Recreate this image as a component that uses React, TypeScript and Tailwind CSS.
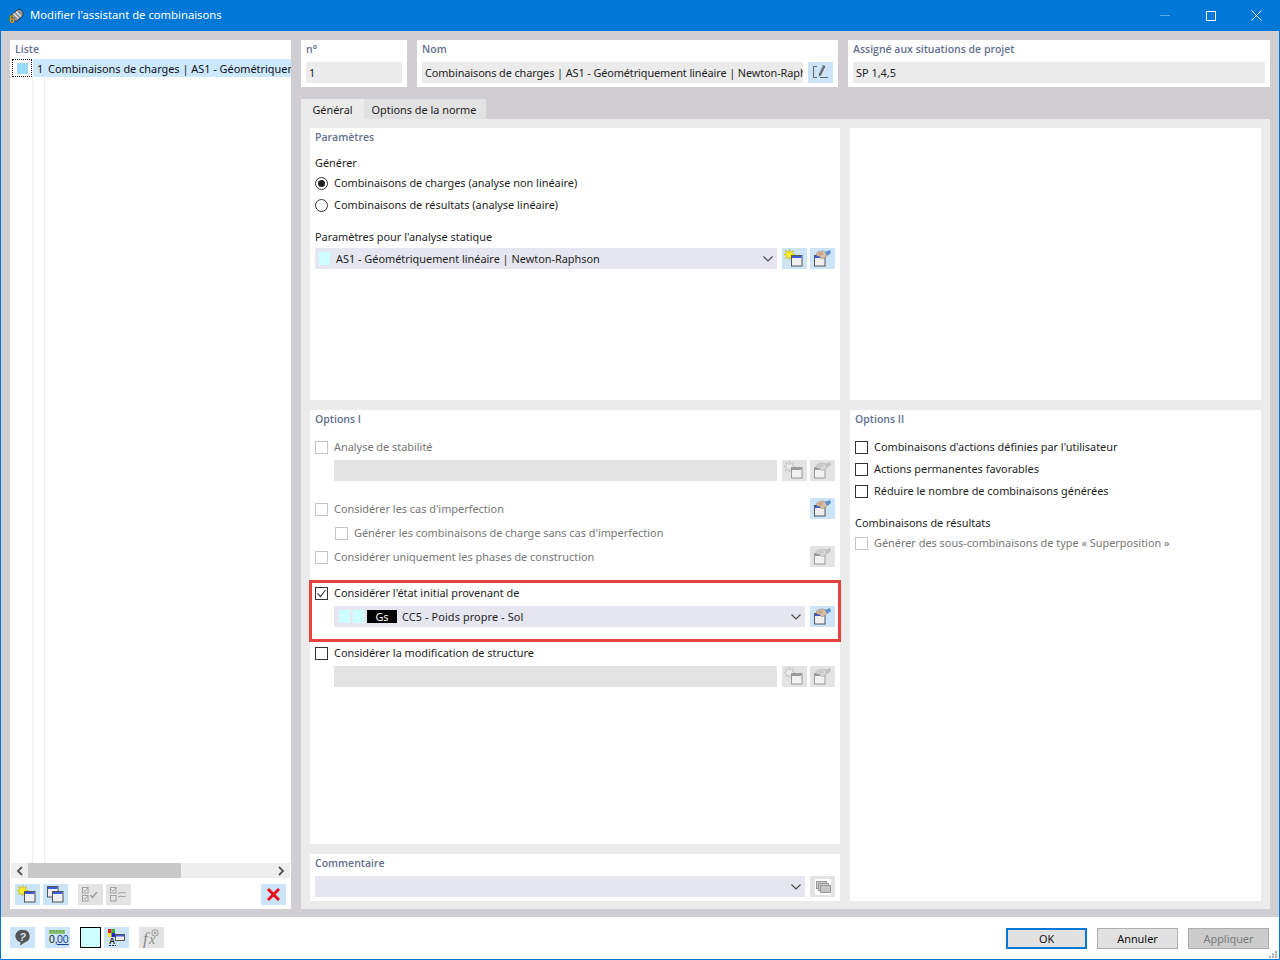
import React from "react";

const FONT = "font-['Noto_Sans','Open_Sans',sans-serif]";

function Win({ x, y, disabled }: { x: number; y: number; disabled?: boolean }) {
  const s = disabled ? "#9a9a9a" : "#555";
  return (
    <g>
      <rect x={x + 0.5} y={y + 0.5} width="10.500" height="10.500" fill={disabled ? "#f2f2f2" : "#efefef"} stroke={s} />
      <rect x={x + 1} y={y + 1} width="9.500" height="2" fill={disabled ? "#9a9a9a" : "#3b5bdb"} />
    </g>
  );
}

function StarIcon({ disabled }: { disabled?: boolean }) {
  return (
    <svg width="21" height="19" viewBox="0 0 21 19">
      <path
        d="M5.500 0l1 3.200L9.500 1.500 8.300 4.500 11 5.500 8.300 6.700 9.500 9.700 6.500 8 5.500 11 4.500 8 1.500 9.700 2.700 6.700 0 5.500l2.700-1L1.500 1.500l3 1.700z"
        fill={disabled ? "#ececec" : "#ffee22"}
        stroke={disabled ? "#aaa" : "#b5a800"}
        strokeWidth="0.500"
      />
      <Win x={7} y={6} disabled={disabled} />
    </svg>
  );
}

function HandIcon({ disabled }: { disabled?: boolean }) {
  return (
    <svg width="21" height="19" viewBox="0 0 21 19">
      <Win x={2} y={6} disabled={disabled} />
      <path
        d="M4 5c1-2 4-3 7-3l3 1c1 1 2 3 0 5l-3 1.500c-2 .5-3-1-3-2L5 7z"
        fill={disabled ? "#d6d6d6" : "#dcc0a6"}
        stroke={disabled ? "#aaa" : "#96785e"}
        strokeWidth="0.500"
      />
      <path d="M6 4.500l5-.5M6.500 6l4-.5" stroke={disabled ? "#aaa" : "#96785e"} strokeWidth="0.500" />
      <path d="M13 3l5-2 1 3-4 3z" fill={disabled ? "#c0c0c0" : "#5b8fd0"} />
    </svg>
  );
}

function EditIcon() {
  return (
    <svg width="21" height="19" viewBox="0 0 21 19">
      <path d="M7 3.500H3.500v11H7" fill="none" stroke="#666" />
      <path d="M10 14.500h8" stroke="#666" />
      <path d="M13 2l2.500 1.200-4.500 9-2 1.300-.2-2.400z" fill="#666" />
      <path d="M13 3.500l-3.500 7" stroke="#bbb" strokeWidth="0.600" />
    </svg>
  );
}

function CopyIcon() {
  return (
    <svg width="21" height="19" viewBox="0 0 21 19">
      <Win x={2} y={1} />
      <Win x={7} y={6} />
    </svg>
  );
}

function CheckAllIcon() {
  return (
    <svg width="21" height="19" viewBox="0 0 21 19" fill="none" stroke="#a0a0a0">
      <rect x="2.500" y="2.500" width="5.500" height="5.500" fill="#eee" />
      <rect x="2.500" y="10.500" width="5.500" height="5.500" fill="#eee" />
      <path d="M3.500 4.500l1.500 2 3-4M3.500 12.500l1.500 2 3-4" />
      <path d="M10.500 10l2 2.500 4.500-5.500" strokeWidth="1.600" />
    </svg>
  );
}

function CheckSwapIcon() {
  return (
    <svg width="21" height="19" viewBox="0 0 21 19" fill="none" stroke="#a0a0a0">
      <rect x="2.500" y="2.500" width="5.500" height="5.500" fill="#eee" />
      <rect x="2.500" y="10.500" width="5.500" height="5.500" />
      <path d="M3.500 4.500l1.500 2 3-4M10 9c2-2 5-2 8-1M10 12c3-2 5 1 8-1" />
    </svg>
  );
}

function CrossIcon() {
  return (
    <svg width="21" height="19" viewBox="0 0 21 19">
      <path d="M5 4l11 11M16 4L5 15" stroke="#e8101c" strokeWidth="3" />
    </svg>
  );
}

function HelpIcon() {
  return (
    <svg width="21" height="19" viewBox="0 0 21 19">
      <path d="M11 2a6.500 6.200 0 0 1 2.500 12L8 17.500l.5-3.300A6.500 6.200 0 0 1 11 2z" fill="#555" />
      <text x="10.500" y="12.500" textAnchor="middle" fontSize="11" fontWeight="700" fontFamily="Liberation Sans" fontStyle="italic" fill="#cce4f7">?</text>
    </svg>
  );
}

function DecimalIcon() {
  return (
    <svg width="23" height="21" viewBox="0 0 23 21">
      <rect x="3" y="3" width="16" height="4" fill="#8ac070" />
      <path d="M5 3v2M8 3v2M11 3v2M14 3v2M17 3v2" stroke="#5a8f48" />
      <text x="3" y="16" fontSize="10.500" fontFamily="Liberation Sans" fill="#222">0,</text>
      <text x="11" y="16" fontSize="10.500" fontFamily="Liberation Sans" fill="#1a3f9c" textDecoration="underline">00</text>
    </svg>
  );
}

function ColorTextIcon() {
  return (
    <svg width="23" height="21" viewBox="0 0 23 21">
      <rect x="3" y="2" width="3.500" height="4" fill="#d22" />
      <rect x="6.500" y="2" width="3.500" height="4" fill="#3a3" />
      <rect x="3" y="6" width="3.500" height="4" fill="#ee2" />
      <rect x="6.500" y="6" width="3.500" height="4" fill="#22c" />
      <text x="4" y="16.500" fontSize="8.500" fontWeight="700" fontFamily="Liberation Sans" fill="#222">A</text>
      <rect x="10.500" y="7.500" width="9" height="6" fill="#eee" stroke="#555" />
      <rect x="11" y="8" width="8" height="1.500" fill="#3b5bdb" />
      <path d="M4 18.500h7" stroke="#222" strokeDasharray="2 1" />
    </svg>
  );
}

function FxIcon() {
  return (
    <svg width="23" height="21" viewBox="0 0 23 21">
      <text x="3" y="17" fontSize="17" fontStyle="italic" fontFamily="Liberation Serif" fill="#8a8a8a">f</text>
      <text x="9" y="17" fontSize="14" fontStyle="italic" fontFamily="Liberation Serif" fill="#8a8a8a">x</text>
      <circle cx="15" cy="6" r="3.200" fill="none" stroke="#9a9a9a" />
      <circle cx="15" cy="6" r="1.200" fill="#9a9a9a" />
    </svg>
  );
}

function StackIcon() {
  return (
    <svg width="16" height="16" viewBox="0 0 16 16">
      <rect x="0" y="0" width="16" height="16" fill="#fff" />
      <rect x="1.500" y="2.500" width="10" height="7" fill="#ccc" stroke="#999" />
      <rect x="3.500" y="4.500" width="10" height="7" fill="#ccc" stroke="#999" />
      <rect x="5.500" y="6.500" width="10" height="7" fill="#c4c4c4" stroke="#999" />
    </svg>
  );
}

function Btn({ children, off }: { children: React.ReactNode; off?: boolean }) {
  return (
    <div className={`w-[25px] h-[21px] shrink-0 flex items-center justify-center ${off ? "bg-[#e3e3e3]" : "bg-[#cce4f7]"}`}>
      {children}
    </div>
  );
}

function Chevron() {
  return (
    <svg width="10" height="6" viewBox="0 0 10 6" fill="none" stroke="#444" strokeWidth="1.100">
      <path d="M0.500 0.500L5 5l4.500-4.500" />
    </svg>
  );
}

function Check({ checked, off }: { checked?: boolean; off?: boolean }) {
  return (
    <div className={`w-[13px] h-[13px] shrink-0 border flex items-center justify-center bg-white ${off ? "border-[#c4c4c4]" : "border-[#333]"}`}>
      {checked && (
        <svg width="11" height="11" viewBox="0 0 11 11" fill="none" stroke="#444" strokeWidth="1.200">
          <path d="M1.500 5.500l3 3 5-6.500" />
        </svg>
      )}
    </div>
  );
}

function Radio({ on }: { on?: boolean }) {
  return (
    <div className="w-[13px] h-[13px] shrink-0 rounded-full border border-[#333] bg-white flex items-center justify-center">
      {on && <div className="w-[7px] h-[7px] rounded-full bg-[#222]" />}
    </div>
  );
}

function CheckRow({ label, checked, off, indent }: { label: string; checked?: boolean; off?: boolean; indent?: boolean }) {
  return (
    <div className={`h-[22px] flex items-center gap-[6px] ${indent ? "pl-[20px]" : ""} ${off ? "text-[#767676]" : "text-[#1e1e1e]"}`}>
      <Check checked={checked} off={off} />
      <span className="whitespace-nowrap">{label}</span>
    </div>
  );
}

function Head({ children }: { children: React.ReactNode }) {
  return <div className="h-[18px] leading-[18px] font-['Open_Sans',sans-serif] text-[10.500px] font-semibold text-[#64708f] whitespace-nowrap">{children}</div>;
}

function Select({ children, className }: { children?: React.ReactNode; className?: string }) {
  return (
    <div className={`h-[21px] bg-[#e6e6f0] flex items-center justify-between pr-[4px] ${className ?? ""}`}>
      <div className="flex items-center min-w-0 pt-[2px]">{children}</div>
      <Chevron />
    </div>
  );
}

function Swatch() {
  return <div className="w-[11px] h-[13px] -mt-[2px] bg-[#ccffff] shrink-0" />;
}

function TopBox({ label, className, children }: { label: string; className: string; children: React.ReactNode }) {
  return (
    <div className={`h-[47px] bg-white px-[5px] ${className}`}>
      <Head>{label}</Head>
      <div className="mt-[4px] flex gap-[5px]">{children}</div>
    </div>
  );
}

function Field({ children, className }: { children?: React.ReactNode; className?: string }) {
  return (
    <div className={`h-[21px] bg-[#ebebeb] px-[3px] leading-[21px] whitespace-nowrap overflow-hidden min-w-0 ${className ?? ""}`}>
      {children}
    </div>
  );
}

function BottomBtn({ children, variant }: { children: string; variant?: "primary" | "off" }) {
  const c =
    variant === "primary"
      ? "border-2 border-[#0078d7] bg-[#e1e1e1] text-[#111]"
      : variant === "off"
        ? "border border-[#adadad] bg-[#cccccc] text-[#7a7a7a]"
        : "border border-[#adadad] bg-[#e1e1e1] text-[#111]";
  return <div className={`w-[81px] h-[21px] flex items-center justify-center pt-[2px] ${c}`}>{children}</div>;
}

export default function App() {
  return (
    <div className={`${FONT} w-[1280px] h-[960px] flex flex-col bg-[#0078d7] text-[10.900px] leading-none text-[#1e1e1e] overflow-hidden`}>
      {/* title bar */}
      <div className="h-[31px] shrink-0 flex items-center text-white text-[11.250px]">
        <div className="w-[30px] pl-[8px] shrink-0">
          <svg width="16" height="16" viewBox="0 0 16 16">
            <path d="M3 7.500L9.500 1.500c1.500-.8 4 .2 5 2s.8 4-.5 5L8 14z" fill="#8a8f98" stroke="#222" strokeWidth="0.800" />
            <path d="M5.500 5.500l5 5M8 3.500l5 5" stroke="#e8e8e8" strokeWidth="1.200" />
            <text x="1" y="15" fontSize="10" fontWeight="700" fontFamily="Liberation Sans" fill="#f2c230" stroke="#5a4000" strokeWidth="0.300">6</text>
          </svg>
        </div>
        <span className="-mt-px">Modifier l'assistant de combinaisons</span>
        <div className="ml-auto flex items-center pr-px">
          <div className="w-[46px] flex justify-center"><div className="w-[10px] h-px bg-[#5ea9e6]" /></div>
          <div className="w-[45px] flex justify-center"><div className="w-[10px] h-[10px] border border-white" /></div>
          <div className="w-[46px] flex justify-center">
            <svg width="11" height="11" viewBox="0 0 11 11" stroke="#fff"><path d="M0.500 0.500l10 10M10.500 0.500l-10 10" /></svg>
          </div>
        </div>
      </div>

      {/* body */}
      <div className="flex-1 mx-px mb-px flex flex-col bg-white min-h-0">
        <div className="h-[886px] shrink-0 bg-[#d0ced3] pt-[9px] pl-[9px] pr-[9px] flex gap-[10px]">
          {/* left list */}
          <div className="w-[281px] h-[869px] bg-white flex flex-col shrink-0">
            <div className="pl-[5px]"><Head>Liste</Head></div>
            <div className="flex-1 relative min-h-0 overflow-hidden">
              <div className="flex h-[18px] mt-px">
                <div className="w-[20px] ml-[2px] shrink-0 border border-dotted border-[#222] flex items-center justify-center">
                  <div className="w-[11px] h-[11px] bg-[#99daf8]" />
                </div>
                <div className="flex-1 min-w-0 ml-px bg-[#cce8ff] flex items-center pt-[2px] whitespace-nowrap overflow-hidden text-[#111]">
                  <span className="w-[11px] ml-[4px] shrink-0">1</span>
                  <span>Combinaisons de charges | AS1 - Géométriquement linéaire | Newton-Raphson</span>
                </div>
              </div>
              <div className="absolute left-[22px] top-[19px] bottom-0 w-px bg-[#eeeeee]" />
              <div className="absolute left-[34px] top-[19px] bottom-0 w-px bg-[#eeeeee]" />
            </div>
            <div className="h-[15px] mx-px bg-[#eeeeee] flex items-center justify-between px-[5px] relative shrink-0">
              <svg width="7" height="10" viewBox="0 0 7 10" fill="none" stroke="#555" strokeWidth="1.800"><path d="M6 1L2 5l4 4" /></svg>
              <div className="absolute left-[17px] top-0 bottom-0 w-[153px] bg-[#c8c8c8]" />
              <svg width="7" height="10" viewBox="0 0 7 10" fill="none" stroke="#555" strokeWidth="1.800"><path d="M1 1l4 4-4 4" /></svg>
            </div>
            <div className="h-[31px] shrink-0 flex items-start pt-[6px] pl-[5px] pr-[5px]">
              <Btn><StarIcon /></Btn>
              <div className="w-[3px]" />
              <Btn><CopyIcon /></Btn>
              <div className="w-[10px]" />
              <Btn off><CheckAllIcon /></Btn>
              <div className="w-[3px]" />
              <Btn off><CheckSwapIcon /></Btn>
              <div className="ml-auto"><Btn><CrossIcon /></Btn></div>
            </div>
          </div>

          {/* right area */}
          <div className="flex-1 min-w-0 flex flex-col">
            <div className="flex gap-[10px] shrink-0">
              <TopBox label="n°" className="w-[106px]">
                <Field className="flex-1">1</Field>
              </TopBox>
              <TopBox label="Nom" className="w-[421px]">
                <Field className="w-[381px] tracking-[-0.1px]">Combinaisons de charges | AS1 - Géométriquement linéaire | Newton-Raphson</Field>
                <Btn><EditIcon /></Btn>
              </TopBox>
              <TopBox label="Assigné aux situations de projet" className="w-[422px]">
                <Field className="flex-1">SP 1,4,5</Field>
              </TopBox>
            </div>

            <div className="flex mt-[12px] h-[20px] shrink-0">
              <div className="w-[63px] bg-[#ebebeb] flex items-center justify-center pt-[2px]">Général</div>
              <div className="w-[122px] bg-[#e2e2e2] flex items-center justify-center pt-[2px] pr-[2px]">Options de la norme</div>
            </div>

            <div className="h-[790px] bg-[#ebebeb] p-[9px] pb-[8px] flex gap-[10px] shrink-0">
              <div className="w-[530px] shrink-0 flex flex-col gap-[10px]">
                {/* Paramètres */}
                <div className="h-[272px] bg-white px-[5px] shrink-0">
                  <Head>Paramètres</Head>
                  <div className="h-[18px] mt-[8px] flex items-center">Générer</div>
                  <div className="h-[22px] flex items-center gap-[6px]"><Radio on /><span>Combinaisons de charges (analyse non linéaire)</span></div>
                  <div className="h-[22px] flex items-center gap-[6px]"><Radio /><span>Combinaisons de résultats (analyse linéaire)</span></div>
                  <div className="h-[18px] mt-[12px] flex items-center">Paramètres pour l'analyse statique</div>
                  <div className="mt-[2px] flex gap-[5px]">
                    <Select className="w-[462px]">
                      <div className="ml-[4px] mr-[6px]"><Swatch /></div>
                      <span>AS1 - Géométriquement linéaire | Newton-Raphson</span>
                    </Select>
                    <div className="flex gap-[3px]">
                      <Btn><StarIcon /></Btn>
                      <Btn><HandIcon /></Btn>
                    </div>
                  </div>
                </div>

                {/* Options I */}
                <div className="h-[434px] bg-white px-[5px] shrink-0">
                  <Head>Options I</Head>
                  <div className="mt-[8px]"><CheckRow label="Analyse de stabilité" off /></div>
                  <div className="mt-[2px] pl-[19px] flex gap-[5px]">
                    <div className="w-[443px] h-[21px] bg-[#e3e3e3]" />
                    <div className="flex gap-[3px]">
                      <Btn off><StarIcon disabled /></Btn>
                      <Btn off><HandIcon disabled /></Btn>
                    </div>
                  </div>
                  <div className="mt-[17px] flex justify-between items-start">
                    <CheckRow label="Considérer les cas d'imperfection" off />
                    <Btn><HandIcon /></Btn>
                  </div>
                  <div className="mt-[2px]"><CheckRow label="Générer les combinaisons de charge sans cas d'imperfection" off indent /></div>
                  <div className="mt-[2px] flex justify-between items-start">
                    <CheckRow label="Considérer uniquement les phases de construction" off />
                    <Btn off><HandIcon disabled /></Btn>
                  </div>
                  <div className="mt-[14px] relative">
                    <CheckRow label="Considérer l'état initial provenant de" checked />
                    <div className="mt-[2px] pl-[19px] flex gap-[5px]">
                      <Select className="w-[471px]">
                        <div className="ml-[5px] flex gap-[3px] items-center">
                          <Swatch />
                          <Swatch />
                        </div>
                        <div className="ml-[3px] -mt-[2px] w-[30px] h-[13px] bg-black text-white flex items-center justify-center pt-px shrink-0">Gs</div>
                        <span className="ml-[5px] tracking-[0.1px]">CC5 - Poids propre - Sol</span>
                      </Select>
                      <Btn><HandIcon /></Btn>
                    </div>
                    <div className="absolute left-[-6px] right-[-6px] top-[-2px] h-[62px] border-[3px] border-[#e8423f]" />
                  </div>
                  <div className="mt-[15px]"><CheckRow label="Considérer la modification de structure" /></div>
                  <div className="mt-[2px] pl-[19px] flex gap-[5px]">
                    <div className="w-[443px] h-[21px] bg-[#e3e3e3]" />
                    <div className="flex gap-[3px]">
                      <Btn off><StarIcon disabled /></Btn>
                      <Btn off><HandIcon disabled /></Btn>
                    </div>
                  </div>
                </div>

                {/* Commentaire */}
                <div className="h-[47px] bg-white px-[5px] shrink-0">
                  <Head>Commentaire</Head>
                  <div className="mt-[4px] flex gap-[5px]">
                    <Select className="w-[490px]" />
                    <Btn off><StackIcon /></Btn>
                  </div>
                </div>
              </div>

              <div className="flex-1 min-w-0 flex flex-col gap-[10px]">
                <div className="h-[272px] bg-white shrink-0" />
                <div className="flex-1 bg-white px-[5px]">
                  <Head>Options II</Head>
                  <div className="mt-[8px]">
                    <CheckRow label="Combinaisons d'actions définies par l'utilisateur" />
                    <CheckRow label="Actions permanentes favorables" />
                    <CheckRow label="Réduire le nombre de combinaisons générées" />
                  </div>
                  <div className="h-[18px] mt-[12px] flex items-center">Combinaisons de résultats</div>
                  <CheckRow label="Générer des sous-combinaisons de type « Superposition »" off />
                </div>
              </div>
            </div>
          </div>
        </div>

        {/* bottom bar */}
        <div className="flex-1 flex items-start pt-[10px] pl-[9px] pr-[10px] relative">
          <Btn><HelpIcon /></Btn>
          <div className="w-[10px]" />
          <Btn><DecimalIcon /></Btn>
          <div className="w-[10px]" />
          <div className="w-[21px] h-[21px] bg-[#ccffff] border border-black" />
          <div className="w-[3px]" />
          <Btn><ColorTextIcon /></Btn>
          <div className="w-[10px]" />
          <Btn off><FxIcon /></Btn>
          <div className="ml-auto flex gap-[10px] mt-px">
            <BottomBtn variant="primary">OK</BottomBtn>
            <BottomBtn>Annuler</BottomBtn>
            <BottomBtn variant="off">Appliquer</BottomBtn>
          </div>
          <svg className="absolute right-[2px] bottom-[1px]" width="8" height="7" viewBox="0 0 8 7" fill="#b0b0b0">
            <rect x="6" y="0" width="2" height="2" />
            <rect x="3" y="2.500" width="2" height="2" />
            <rect x="6" y="2.500" width="2" height="2" />
            <rect x="0" y="5" width="2" height="2" />
            <rect x="3" y="5" width="2" height="2" />
            <rect x="6" y="5" width="2" height="2" />
          </svg>
        </div>
      </div>
    </div>
  );
}
